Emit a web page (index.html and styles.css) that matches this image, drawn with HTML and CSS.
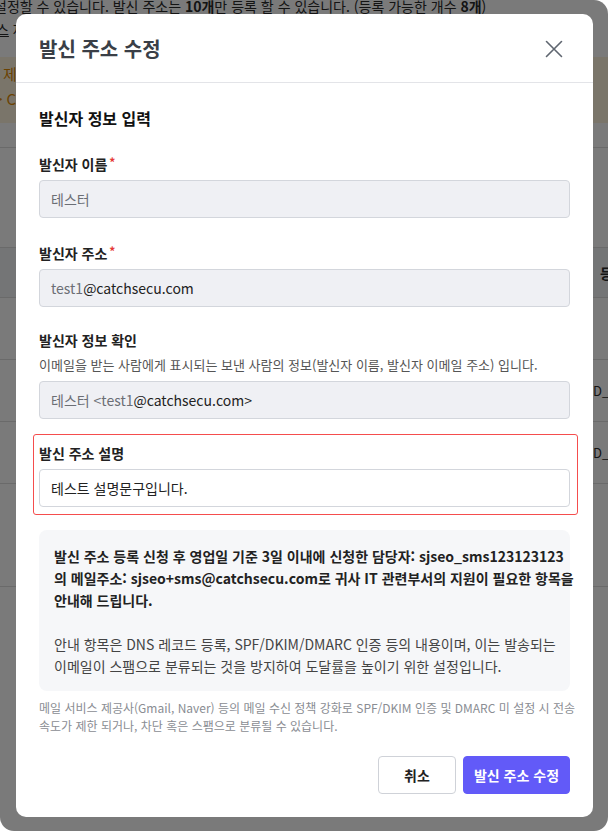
FILE: index.html
```html
<!DOCTYPE html>
<html lang="ko">
<head>
    <meta charset="UTF-8">
    <meta name="viewport" content="width=device-width, initial-scale=1.0">
    <title>발신 주소 수정</title>
    <link rel="stylesheet" href="styles.css">
</head>
<body>
    <div class="screen">
        <!-- Page behind the dialog -->
        <div class="page">
            <p class="notice">설정할 수 있습니다. 발신 주소는 <b>10개</b>만 등록 할 수 있습니다. (등록 가능한 개수 <b>8개</b>)</p>
            <p class="notice-link"><u>스</u> 재설정</p>
            <div class="warn-banner">
                <p>! 제한 안내</p>
                <p>&gt; CATCHSECU</p>
            </div>
            <div class="toolbar"></div>
            <div class="table">
                <div class="table-row table-head"><span></span><span>등록</span></div>
                <div class="table-row"><span></span><span></span></div>
                <div class="table-row"><span></span><span>D_SENDER</span></div>
                <div class="table-row"><span></span><span>D_SENDER</span></div>
                <div class="table-row table-foot"><span></span><span></span></div>
            </div>
        </div>

        <!-- Dialog -->
        <div class="overlay">
            <div class="modal">
                <div class="modal-header">
                    <h2>발신 주소 수정</h2>
                    <button class="close-button" aria-label="닫기">
                        <svg width="18" height="18" viewBox="0 0 18 18">
                            <path d="M1.5 1.5 L16.5 16.5 M16.5 1.5 L1.5 16.5" stroke="#5f6670" stroke-width="1.6" fill="none" stroke-linecap="round"/>
                        </svg>
                    </button>
                </div>

                <div class="modal-body">
                    <h3>발신자 정보 입력</h3>

                    <div class="field">
                        <label>발신자 이름<span class="required">*</span></label>
                        <div class="input disabled">테스터</div>
                    </div>

                    <div class="field">
                        <label>발신자 주소<span class="required">*</span></label>
                        <div class="input disabled">test1<span class="dark">@catchsecu.com</span></div>
                    </div>

                    <div class="field">
                        <label>발신자 정보 확인</label>
                        <p class="help">이메일을 받는 사람에게 표시되는 보낸 사람의 정보(발신자 이름, 발신자 이메일 주소) 입니다.</p>
                        <div class="input disabled">테스터 &lt;test1<span class="dark">@catchsecu.com&gt;</span></div>
                    </div>

                    <div class="field highlight">
                        <label>발신 주소 설명</label>
                        <div class="input">테스트 설명문구입니다.</div>
                    </div>

                    <div class="info-box">
                        <p class="strong">발신 주소 등록 신청 후 영업일 기준 3일 이내에 신청한 담당자: sjseo_sms123123123<br>의 메일주소: sjseo+sms@catchsecu.com로 귀사 IT 관련부서의 지원이 필요한 항목을<br>안내해 드립니다.</p>
                        <p>안내 항목은 DNS 레코드 등록, SPF/DKIM/DMARC 인증 등의 내용이며, 이는 발송되는<br>이메일이 스팸으로 분류되는 것을 방지하여 도달률을 높이기 위한 설정입니다.</p>
                    </div>

                    <p class="footnote">메일 서비스 제공사(Gmail, Naver) 등의 메일 수신 정책 강화로 SPF/DKIM 인증 및 DMARC 미 설정 시 전송<br>속도가 제한 되거나, 차단 혹은 스팸으로 분류될 수 있습니다.</p>

                    <div class="modal-footer">
                        <button class="btn btn-cancel">취소</button>
                        <button class="btn btn-primary">발신 주소 수정</button>
                    </div>
                </div>
            </div>
        </div>
    </div>
</body>
</html>
```

FILE: styles.css
```css
body {
    margin: 0;
    background-color: #fff;
    font-family: "Noto Sans CJK KR", "Noto Sans", sans-serif;
}

.screen {
    position: relative;
    width: 608px;
    height: 831px;
    overflow: hidden;
    border-radius: 0 14px 14px 14px;
    background-color: #fff;
}

/* Background page */
.page {
    color: #2b2b2b;
    font-size: 14px;
}

.notice {
    margin: -4px 0 0 -6px;
    line-height: 20px;
    white-space: nowrap;
}

.notice-link {
    margin: 3px 0 0 -4px;
    line-height: 20px;
}

.warn-banner {
    margin-top: 18px;
    height: 66px;
    padding: 4px 0 0 0;
    box-sizing: border-box;
    background-color: #fff5de;
    color: #e08a00;
    font-size: 15px;
}

.warn-banner p {
    margin: 0 0 0 -6px;
    line-height: 25px;
}

.toolbar {
    height: 24px;
    border-bottom: 1px solid #ddd;
}

.table {
    margin-top: 99px;
    border-top: 1px solid #ddd;
}

.table-row {
    display: grid;
    grid-template-columns: 593px 1fr;
    align-items: center;
    height: 61px;
    border-bottom: 1px solid #ddd;
    white-space: nowrap;
    font-size: 13px;
}

.table-head {
    height: 49px;
    background-color: #f3f4f6;
    font-weight: bold;
    padding-left: 7px;
    font-size: 14px;
}

.table-foot {
    height: 102px;
}

/* Dialog */
.overlay {
    position: absolute;
    top: 0;
    left: 0;
    right: 0;
    bottom: 0;
    background-color: rgba(0, 0, 0, 0.52);
    padding: 14px 0 0 16px;
}

.modal {
    width: 577px;
    background-color: #fff;
    border-radius: 10px;
    color: #222;
}

.modal-header {
    display: flex;
    justify-content: space-between;
    align-items: center;
    padding: 21px 25px 19px 23px;
    border-bottom: 1px solid #e3e4e8;
}

.modal-header h2 {
    margin: 0;
    font-size: 20px;
    line-height: 28px;
    font-weight: bold;
    color: #3a3f47;
}

.close-button {
    width: 28px;
    height: 28px;
    padding: 0;
    border: none;
    background: none;
    display: flex;
    align-items: center;
    justify-content: center;
    cursor: pointer;
}

.modal-body {
    padding: 23px 23px 23px 23px;
}

.modal-body h3 {
    margin: 0 0 22px;
    font-size: 16px;
    line-height: 24px;
    font-weight: bold;
    color: #111;
}

.field {
    margin-bottom: 23px;
}

.field label {
    display: block;
    font-size: 14px;
    line-height: 20px;
    font-weight: 600;
    color: #222;
    margin-bottom: 6px;
}

.required {
    color: #e53935;
    font-size: 12px;
    margin-left: 2px;
    vertical-align: 3px;
}

.help {
    margin: 0 0 7px;
    font-size: 13px;
    line-height: 18px;
    color: #555;
}

.input {
    height: 38px;
    box-sizing: border-box;
    padding: 0 11px;
    border: 1px solid #d3d6dc;
    border-radius: 4px;
    background-color: #fff;
    font-size: 14px;
    line-height: 36px;
    color: #222;
}

.input.disabled {
    background-color: #eff0f4;
    color: #6b6e75;
}

.dark {
    color: #222;
}

.highlight {
    margin: -8px -8px 15px -6px;
    padding: 8px 7px 7px 5px;
    border: 1.5px solid #f54d4d;
    border-radius: 3px;
}

.info-box {
    background-color: #f6f7f9;
    border-radius: 8px;
    padding: 15px 15px 14px;
    font-size: 14px;
    line-height: 22px;
    color: #444;
}

.info-box p {
    margin: 0;
    white-space: nowrap;
}

.info-box .strong {
    font-weight: bold;
    color: #222;
    margin-bottom: 22px;
}

.footnote {
    margin: 8px 0 21px;
    font-size: 12px;
    line-height: 18px;
    color: #8a8d93;
    white-space: nowrap;
}

.modal-footer {
    display: flex;
    justify-content: flex-end;
    gap: 7px;
}

.btn {
    height: 38px;
    padding: 0;
    border-radius: 4px;
    font-family: inherit;
    font-size: 14px;
    font-weight: 600;
    white-space: nowrap;
    cursor: pointer;
}

.btn-cancel {
    width: 78px;
    background-color: #fff;
    border: 1px solid #cfd2d8;
    color: #222;
}

.btn-primary {
    width: 107px;
    background-color: #625af8;
    border: 1px solid #625af8;
    color: #fff;
}
```
